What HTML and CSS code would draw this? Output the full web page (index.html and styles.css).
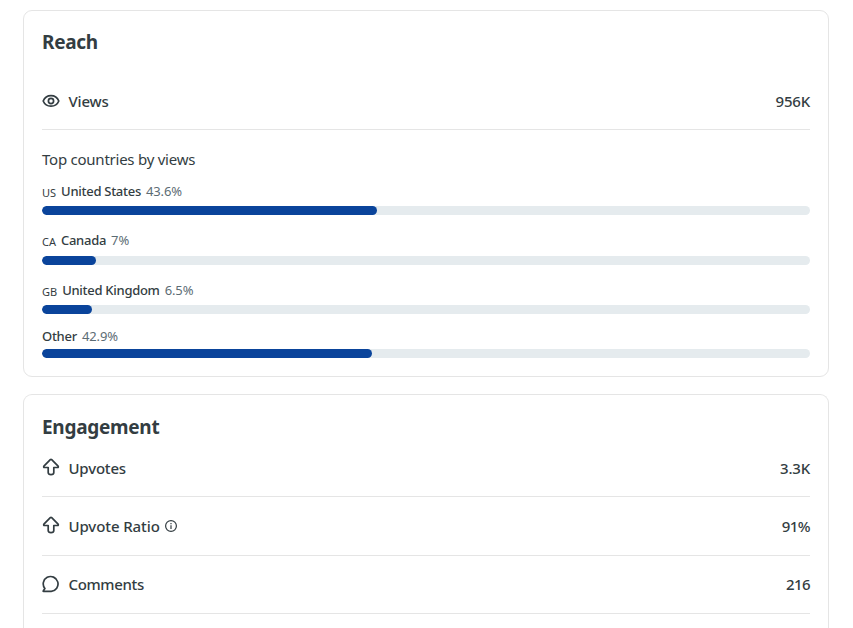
FILE: index.html
```
<!DOCTYPE html>
<html lang="en">
<head>
<meta charset="utf-8">
<title>Post Insights</title>
<link rel="stylesheet" href="styles.css">
</head>
<body>
<main class="insights">
  <section class="card reach">
    <h2 class="title">Reach</h2>
    <div class="row">
      <svg class="icon" viewBox="0 0 18 18"><path d="M1.200 9C2.600 5.600 5.500 3.600 9 3.600S15.400 5.600 16.800 9C15.400 12.400 12.500 14.200 9 14.200S2.600 12.400 1.200 9Z"/><circle cx="9" cy="9" r="2.600"/></svg>
      <span class="label">Views</span><span class="value">956K</span>
    </div>
    <h3 class="subtitle">Top countries by views</h3>
    <div class="country">
      <div class="legend"><span class="code">US</span><span class="name">United States</span><span class="share">43.6%</span></div>
      <div class="track"><div class="fill" style="width:43.6%"></div></div>
    </div>
    <div class="country canada">
      <div class="legend"><span class="code">CA</span><span class="name">Canada</span><span class="share">7%</span></div>
      <div class="track"><div class="fill" style="width:7%"></div></div>
    </div>
    <div class="country kingdom">
      <div class="legend"><span class="code">GB</span><span class="name">United Kingdom</span><span class="share">6.5%</span></div>
      <div class="track"><div class="fill" style="width:6.5%"></div></div>
    </div>
    <div class="country other">
      <div class="legend"><span class="name">Other</span><span class="share">42.9%</span></div>
      <div class="track"><div class="fill" style="width:42.95%"></div></div>
    </div>
  </section>
  <section class="card engagement">
    <h2 class="title">Engagement</h2>
    <div class="row upvotes">
      <svg class="icon" viewBox="0 0 18 18"><path d="M8.300 1.600Q9 1 9.700 1.600L16.100 8.100Q16.700 9.300 15.500 9.500H11.800V14.500Q11.800 16.700 9 16.700T6.200 14.500V9.500H2.500Q1.300 9.300 1.900 8.100Z"/></svg>
      <span class="label">Upvotes</span><span class="value">3.3K</span>
    </div>
    <div class="row ratio">
      <svg class="icon" viewBox="0 0 18 18"><path d="M8.300 1.600Q9 1 9.700 1.600L16.100 8.100Q16.700 9.300 15.500 9.500H11.800V14.500Q11.800 16.700 9 16.700T6.200 14.500V9.500H2.500Q1.300 9.300 1.900 8.100Z"/></svg>
      <span class="label">Upvote Ratio</span>
      <svg class="info" viewBox="0 0 12 12"><circle cx="6" cy="6" r="5.400"/><path d="M6 5.200V9M6 3V4.200"/></svg>
      <span class="value">91%</span>
    </div>
    <div class="row comments">
      <svg class="icon" viewBox="0 0 18 18"><path d="M9.200 16.300H1.500Q.9 16.300 1.300 15.800L2.900 13.600A7.400 7.400 0 1 1 9.200 16.300Z"/></svg>
      <span class="label">Comments</span><span class="value">216</span>
    </div>
  </section>
</main>
</body>
</html>
```
FILE: styles.css
```
* { box-sizing: border-box; }
body {
  margin: 0;
  background: #fff;
  color: #333d42;
  font-family: "Noto Sans", sans-serif;
}
.insights {
  display: flex;
  flex-direction: column;
  gap: 17px;
  width: 806px;
  height: 618px;
  margin-left: 23px;
}
body { padding-top: 10px; }
.card {
  border: 1px solid #e5e5e5;
  border-radius: 9px;
  padding: 18px 18px 0;
}
.reach { height: 367px; }
.engagement {
  height: 234px;
  padding-top: 19px;
  border-bottom: 0;
  border-radius: 9px 9px 0 0;
}
.title {
  margin: 0;
  font-size: 19px;
  line-height: 26px;
  font-weight: 700;
  letter-spacing: -0.28px;
}
.row {
  display: flex;
  align-items: center;
  height: 58px;
  border-bottom: 1px solid #e5e5e5;
  font-size: 15px;
  font-weight: 500;
  letter-spacing: -0.2px;
}
.reach .row { height: 55px; margin-top: 20px; }
.reach .row span { margin-bottom: 2px; }
.upvotes { height: 57px; }
.ratio { height: 59px; }
.ratio .label { letter-spacing: -0.1px; }
.comments .label { letter-spacing: -0.35px; }
.comments span { margin-bottom: 2px; }
.icon {
  width: 18px;
  height: 18px;
  margin: 0 8.500px 2px 0;
  fill: none;
  stroke: currentColor;
  stroke-width: 1.700;
  stroke-linejoin: round;
}
.info {
  width: 12px;
  height: 12px;
  margin: 0 0 1px 5px;
  fill: none;
  stroke: currentColor;
  stroke-width: 1.200;
}
.value { margin-left: auto; }
.ratio .value, .comments .value { letter-spacing: -0.6px; }
.subtitle {
  margin: 19px 0 13px;
  font-size: 15px;
  line-height: 20px;
  font-weight: 400;
  letter-spacing: -0.24px;
}
.legend {
  display: flex;
  align-items: baseline;
  height: 18px;
  margin-bottom: 6px;
  font-size: 13px;
  line-height: 18px;
}
.country { margin-bottom: 16px; }
.canada .legend { margin-bottom: 7px; }
.kingdom { margin-bottom: 13px; }
.other .legend { margin-bottom: 4px; }
.code {
  position: relative;
  top: 1px;
  margin-right: 5px;
  font-size: 11px;
}
.name {
  margin-right: 5px;
  font-weight: 500;
  letter-spacing: -0.28px;
}
.share { color: #5c6c74; letter-spacing: -0.1px; }
.track {
  height: 9px;
  border-radius: 5px;
  background: #e5ebee;
  overflow: hidden;
}
.fill {
  height: 100%;
  border-radius: 5px;
  background: #0a449b;
}
```
